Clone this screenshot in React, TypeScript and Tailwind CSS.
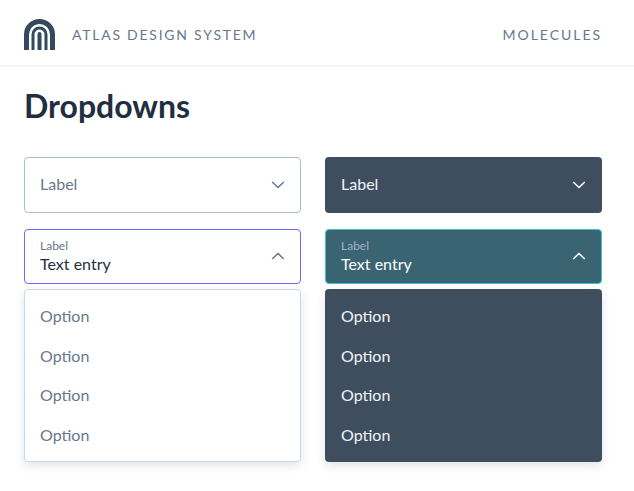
function Chevron({ up, className }: { up?: boolean; className: string }) {
  return (
    <svg width="14" height="8" viewBox="0 0 14 8" fill="none" className={className}>
      <path d={up ? "M1.2 7 L7 1.5 L12.8 7" : "M1.2 1 L7 6.5 L12.8 1"} stroke="currentColor" strokeWidth="1.5" />
    </svg>
  );
}

function Logo() {
  return (
    <svg width="31" height="31" viewBox="0 0 31 31" fill="none" className="text-[#334a5e]">
      <path d="M2.5 31 V15.5 A13 13 0 0 1 28.5 15.5 V31" stroke="currentColor" strokeWidth="5" />
      <path d="M9 31 V15.5 A6.5 6.5 0 0 1 22 15.5 V31" stroke="currentColor" strokeWidth="3" />
      <path d="M13.5 31 V15 A2 2 0 0 1 17.5 15 V31 Z" fill="currentColor" />
    </svg>
  );
}

function Menu({ dark }: { dark?: boolean }) {
  return (
    <div className={`mt-[4.5px] h-[173.5px] rounded-[4px] shadow-[0_4px_10px_rgba(50,70,100,0.14)] ${dark ? "bg-[#3e4e5e] pt-[8px] text-[#f0f4f8]" : "border border-[#c9d6e6] bg-white pt-[7px] text-[#68778d]"}`}>
      {[0, 1, 2, 3].map((i) => (
        <div key={i} className={`flex h-[39.6px] items-center text-base ${dark ? "px-4" : "px-[15px]"}`}>Option</div>
      ))}
    </div>
  );
}

export default function App() {
  return (
    <div className="h-[491px] w-[634px] overflow-hidden bg-white font-['Lato',sans-serif]">
      <header className="flex h-[67px] items-center justify-between border-b-2 border-[#f4f5f7] pt-[3px] pl-6 pr-8">
        <div className="flex items-center gap-[17px]">
          <Logo />
          <span className="mt-[2px] text-sm tracking-[0.125em] text-[#68778d]">ATLAS DESIGN SYSTEM</span>
        </div>
        <span className="mt-[2px] text-sm tracking-[0.14em] text-[#68778d]">MOLECULES</span>
      </header>
      <main className="pl-6 pr-8 pt-[19px]">
        <h1 className="text-[32px] leading-10 font-bold text-[#1f2f3f]">Dropdowns</h1>
        <div className="mt-[31px] grid grid-cols-2 gap-x-6">
          <div>
            <div className="flex h-[55.5px] items-center justify-between rounded-[4px] border border-[#a8bdd4] px-[15px] pb-[1px] text-base text-[#68778d]">
              <span>Label</span>
              <Chevron className="mt-[2px] text-[#68778d]" />
            </div>
            <div className="mt-4 flex h-[55.5px] items-center justify-between rounded-[4px] border border-[#6a6cff] px-[15px]">
              <div className="flex flex-col">
                <span className="text-xs leading-[14px] text-[#68778d]">Label</span>
                <span className="mt-px text-base leading-5 text-[#1f2f3f]">Text entry</span>
              </div>
              <Chevron up className="text-[#68778d]" />
            </div>
            <Menu />
          </div>
          <div>
            <div className="flex h-[55.5px] items-center justify-between rounded-[4px] bg-[#3e4e5e] px-4 pb-[1px] text-base text-[#f0f4f8]">
              <span>Label</span>
              <Chevron className="mt-[2px] text-white" />
            </div>
            <div className="mt-4 flex h-[55.5px] items-center justify-between rounded-[4px] border border-[#38c6cc] bg-[#3b6473] px-[15px]">
              <div className="flex flex-col">
                <span className="text-xs leading-[14px] text-[#9fb3c4]">Label</span>
                <span className="mt-px text-base leading-5 text-white">Text entry</span>
              </div>
              <Chevron up className="text-white" />
            </div>
            <Menu dark />
          </div>
        </div>
      </main>
    </div>
  );
}
